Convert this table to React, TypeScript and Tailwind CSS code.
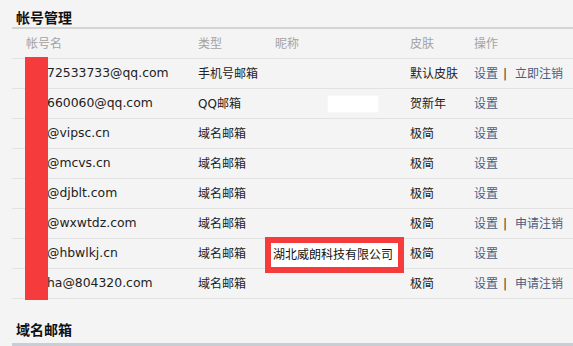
const rows = [
  { name: "72533733@qq.com", type: "手机号邮箱", skin: "默认皮肤", extra: "立即注销" },
  { name: "660060@qq.com", type: "QQ邮箱", skin: "贺新年", blank: true },
  { name: "@vipsc.cn", type: "域名邮箱", skin: "极简" },
  { name: "@mcvs.cn", type: "域名邮箱", skin: "极简" },
  { name: "@djblt.com", type: "域名邮箱", skin: "极简" },
  { name: "@wxwtdz.com", type: "域名邮箱", skin: "极简", extra: "申请注销" },
  { name: "@hbwlkj.cn", type: "域名邮箱", skin: "极简", nick: "湖北威朗科技有限公司" },
  { name: "ha@804320.com", type: "域名邮箱", skin: "极简", extra: "申请注销" },
];

const grid = "grid grid-cols-[172px_77px_135px_64px_1fr]";

export default function App() {
  return (
    <div
      className="w-[573px] h-[346px] overflow-hidden bg-[#f4f4f4] text-[12px] text-[#222] relative"
      style={{ fontFamily: '"DejaVu Sans", "Noto Sans CJK SC", sans-serif' }}
    >
      <div className="pl-[12px]">
        <div className="pl-[4px] pt-[9px] leading-[18px] text-[14px] font-bold text-[#111] border-b-2 border-[#d4d4d4]">
          帐号管理
        </div>
        <div className={`${grid} h-[30px] items-center border-b border-[#e2e2e2] text-[#a3a3a3]`}>
          <div className="pl-[14px]">帐号名</div>
          <div className="pl-[14px]">类型</div>
          <div className="pl-[14px]">昵称</div>
          <div className="pl-[14px]">皮肤</div>
          <div className="pl-[14px]">操作</div>
        </div>
        {rows.map((r) => (
          <div key={r.name} className={`${grid} h-[30px] items-center border-b border-[#e2e2e2]`}>
            <div className="pl-[35px] whitespace-nowrap text-[12.4px]">{r.name}</div>
            <div className="pl-[14px]">{r.type}</div>
            <div className="pl-[14px] relative h-full flex items-center">
              {r.blank && <div className="ml-[52px] w-[52px] h-[18px] bg-white border border-[#f8f8f8]"></div>}
              {r.nick && (
                <div className="absolute left-[4px] top-[-2px] z-10 w-[139px] h-[36px] border-[6px] border-[#f53b3b] bg-white pl-[2px] flex items-center whitespace-nowrap text-[#111]">
                  {r.nick}
                </div>
              )}
            </div>
            <div className="pl-[14px]">{r.skin}</div>
            <div className="pl-[14px] flex items-center whitespace-nowrap text-[#4a5e80]">
              <span>设置</span>
              {r.extra && (
                <>
                  <span className="ml-[5px] text-[#333]">|</span>
                  <span className="ml-[8px]">{r.extra}</span>
                </>
              )}
            </div>
          </div>
        ))}
        <div className="pl-[4px] pt-[22px] leading-[18px] pb-[4px] text-[14px] font-bold text-[#111] border-b-4 border-[#c9ced6]">
          域名邮箱
        </div>
      </div>
      <div className="absolute left-[25px] top-[57px] w-[23px] h-[243px] bg-[#f53b3b]"></div>
    </div>
  );
}
